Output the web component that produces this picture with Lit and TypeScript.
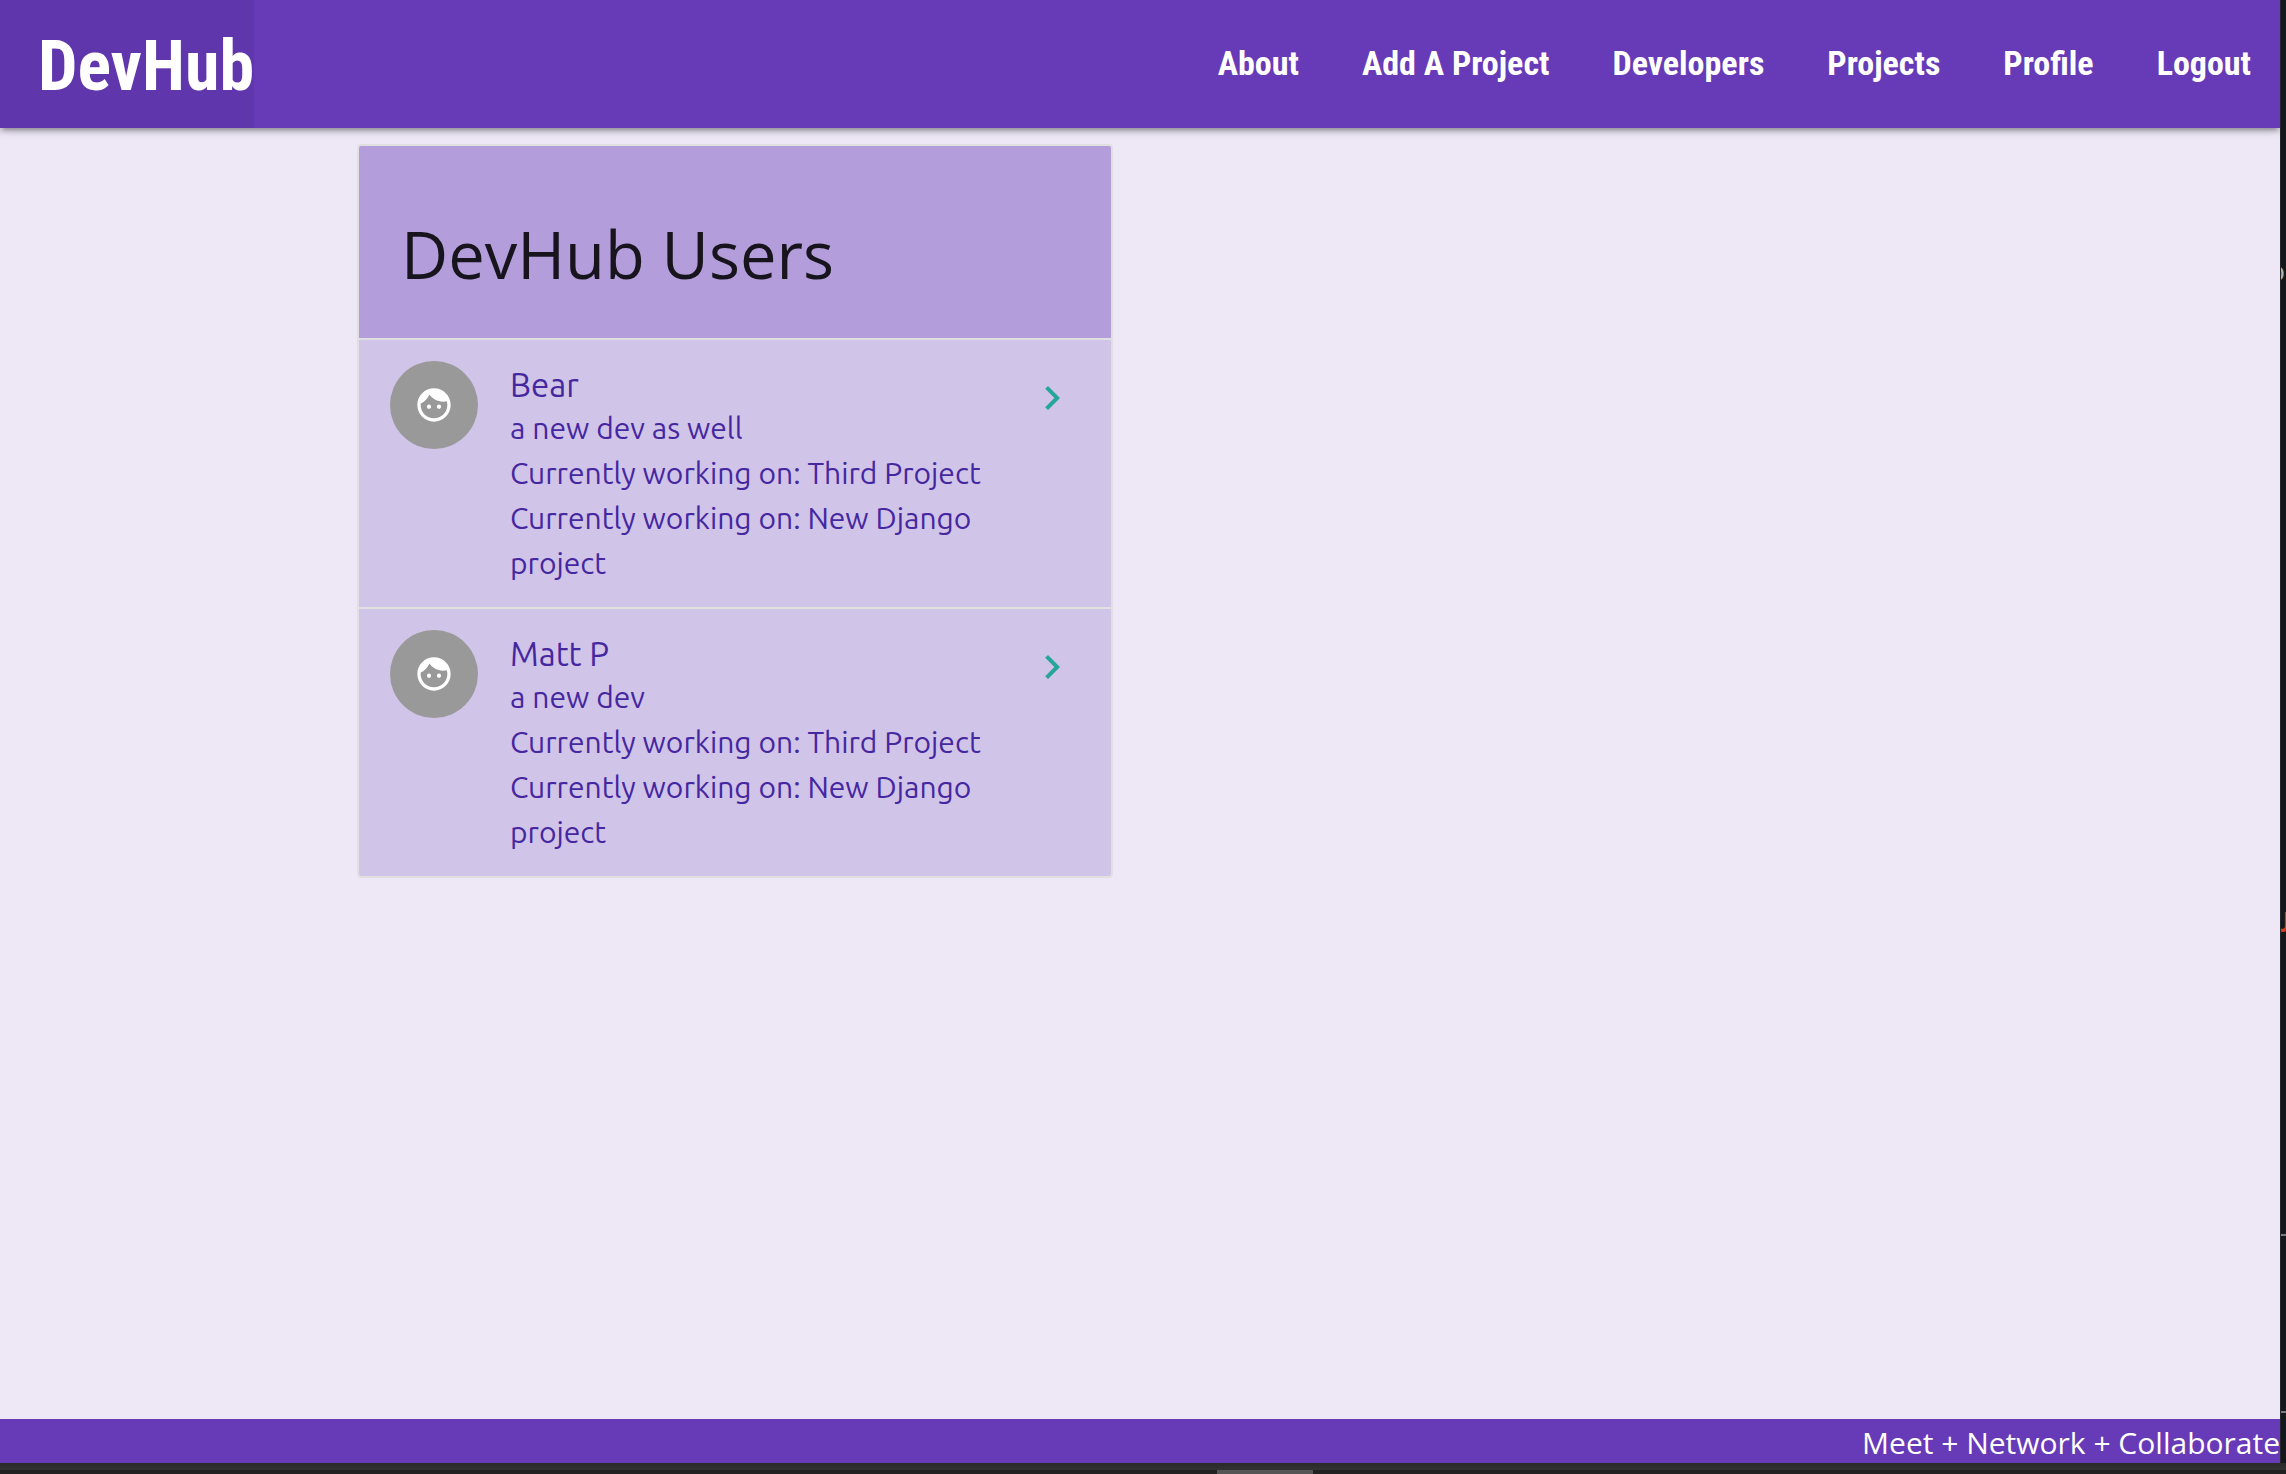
import { LitElement, html, css } from "lit";
import { customElement, property } from "lit/decorators.js";

interface Developer {
  name: string;
  bio: string;
  projects: string[];
}

const NAV_LINKS = ["About", "Add A Project", "Developers", "Projects", "Profile", "Logout"];

const DEVELOPERS: Developer[] = [
  { name: "Bear", bio: "a new dev as well", projects: ["Third Project", "New Django project"] },
  { name: "Matt P", bio: "a new dev", projects: ["Third Project", "New Django project"] },
];

@customElement("dev-nav")
class DevNav extends LitElement {
  static styles = css`
    :host {
      display: block;
      position: relative;
    }
    .bar {
      display: flex;
      justify-content: space-between;
      background: #673ab7;
      box-shadow: 0 4px 4px 0 rgba(0, 0, 0, 0.14), 0 6px 2px -4px rgba(0, 0, 0, 0.12),
        0 2px 10px 0 rgba(0, 0, 0, 0.2);
      font-family: "Roboto Condensed", "Open Sans Condensed", "Liberation Sans", sans-serif;
      font-weight: 700;
    }
    a {
      display: block;
      color: #fff;
      text-decoration: none;
      white-space: nowrap;
    }
    .brand {
      padding: 4px 0 0 38px;
      font-size: 70px;
      line-height: 124px;
      background: rgba(0, 0, 0, 0.06);
    }
    .links {
      display: flex;
      gap: 63px;
      margin: 0;
      padding: 0 29px 0 0;
      list-style: none;
      font-size: 34px;
      line-height: 126px;
    }
  `;
  render() {
    return html`
      <nav class="bar">
        <a class="brand" href="#">DevHub</a>
        <ul class="links">
          ${NAV_LINKS.map((label) => html`<li><a href="#">${label}</a></li>`)}
        </ul>
      </nav>
    `;
  }
}

@customElement("dev-row")
class DevRow extends LitElement {
  @property({ attribute: false }) dev!: Developer;

  static styles = css`
    :host {
      display: block;
      border-top: 2px solid #e0e0e0;
      background: #d1c4e9;
      color: #4527a0;
    }
    .row {
      display: flex;
      align-items: flex-start;
      padding: 21px 35px 21px 31px;
      font-family: Ubuntu, "Open Sans", sans-serif;
      font-size: 30px;
      font-weight: 450;
      line-height: 45px;
    }
    .avatar {
      display: flex;
      align-items: center;
      justify-content: center;
      flex: none;
      width: 88px;
      height: 88px;
      border-radius: 50%;
      background: #999;
    }
    .avatar svg {
      width: 40px;
      height: 40px;
      fill: #fff;
    }
    .text {
      flex: 1;
      min-width: 0;
      padding: 2px 0 0 32px;
    }
    .name {
      margin: 0;
      font-size: 33px;
      font-weight: inherit;
      line-height: 43px;
    }
    p {
      margin: 0;
    }
    .more {
      flex: none;
      margin-top: 13px;
    }
    .more svg {
      display: block;
      width: 48px;
      height: 48px;
      fill: #26a69a;
    }
  `;
  render() {
    const { name, bio, projects } = this.dev;
    return html`
      <div class="row">
        <div class="avatar">
          <svg viewBox="0 0 24 24" aria-hidden="true">
            <path
              d="M9 11.75c-.69 0-1.25.56-1.25 1.25s.56 1.25 1.25 1.25 1.25-.56 1.25-1.25-.56-1.25-1.25-1.25zm6 0c-.69 0-1.25.56-1.25 1.25s.56 1.25 1.25 1.25 1.25-.56 1.25-1.25-.56-1.25-1.25-1.25zM12 2C6.48 2 2 6.48 2 12s4.48 10 10 10 10-4.48 10-10S17.52 2 12 2zm0 18c-4.41 0-8-3.59-8-8 0-.29.02-.58.05-.86 2.36-1.05 4.23-2.98 5.21-5.37C11.07 8.33 14.05 10 17.42 10c.78 0 1.53-.09 2.25-.26.21.71.33 1.47.33 2.26 0 4.41-3.59 8-8 8z"
            />
          </svg>
        </div>
        <div class="text">
          <h2 class="name">${name}</h2>
          <p>${bio}</p>
          ${projects.map((project) => html`<p>${`Currently working on: ${project}`}</p>`)}
        </div>
        <a class="more" href="#" aria-label=${name}>
          <svg viewBox="0 0 24 24" aria-hidden="true">
            <path d="M8.59 16.59L13.17 12 8.59 7.41 10 6l6 6-6 6z" />
          </svg>
        </a>
      </div>
    `;
  }
}

@customElement("app-root")
class AppRoot extends LitElement {
  static styles = css`
    :host {
      display: block;
    }
    .desktop {
      display: grid;
      grid-template: minmax(0, 1fr) 11px / minmax(0, 1fr) 6px;
      height: 100vh;
      background: #14181b;
    }
    .page {
      display: flex;
      flex-direction: column;
      overflow: hidden;
      background: #ede7f6;
    }
    .content {
      display: grid;
      grid-template-columns: 1fr 1fr;
      gap: 54px;
      flex: 1;
      align-items: start;
      box-sizing: border-box;
      width: 70%;
      margin: 0 auto;
      padding: 16px 15px;
    }
    .card {
      overflow: hidden;
      border: 2px solid #e0e0e0;
      border-radius: 4px;
    }
    .title {
      padding: 72px 42px 48px;
      background: #b39ddb;
    }
    h1 {
      margin: 0;
      color: rgba(0, 0, 0, 0.87);
      font-family: "Open Sans", "Noto Sans", sans-serif;
      font-size: 65px;
      font-weight: 400;
      line-height: 72px;
    }
    footer {
      padding-top: 4px;
      background: #673ab7;
      color: #fff;
      font-family: "Open Sans", "Noto Sans", sans-serif;
      font-size: 30px;
      line-height: 40px;
      text-align: right;
      white-space: nowrap;
    }
    .side {
      position: relative;
      overflow: hidden;
      border-left: 1px solid #23282c;
    }
    .line {
      position: absolute;
      left: 0;
      right: 0;
      height: 2px;
      background: #777a7c;
    }
    .line-upper {
      top: 1234px;
    }
    .line-lower {
      top: 1411px;
    }
    .glyph {
      position: absolute;
      font-size: 28px;
      line-height: 32px;
    }
    .glyph-light {
      top: 254px;
      right: 1px;
      color: #a9b4b8;
      font-family: "Open Sans", sans-serif;
    }
    .glyph-red {
      top: 907px;
      left: -6px;
      color: #c8401f;
      font-family: Roboto, sans-serif;
      font-weight: 700;
    }
    .strip {
      grid-column: 1 / -1;
      display: grid;
      grid-template: 7px 4px / 1217fr 96fr 973fr;
      background: linear-gradient(#2a2a2a, #333 7px, #222 7px, #222);
    }
    .thumb {
      grid-area: 2 / 2;
      background: #555;
    }
  `;
  render() {
    return html`
      <div class="desktop">
        <div class="page">
          <dev-nav></dev-nav>
          <main class="content">
            <section class="card">
              <header class="title"><h1>DevHub Users</h1></header>
              ${DEVELOPERS.map((dev) => html`<dev-row .dev=${dev}></dev-row>`)}
            </section>
          </main>
          <footer>Meet + Network + Collaborate</footer>
        </div>
        <div class="side" aria-hidden="true">
          <span class="glyph glyph-light">o</span>
          <span class="glyph glyph-red">J</span>
          <span class="line line-upper"></span>
          <span class="line line-lower"></span>
        </div>
        <div class="strip" aria-hidden="true"><span class="thumb"></span></div>
      </div>
    `;
  }
}
